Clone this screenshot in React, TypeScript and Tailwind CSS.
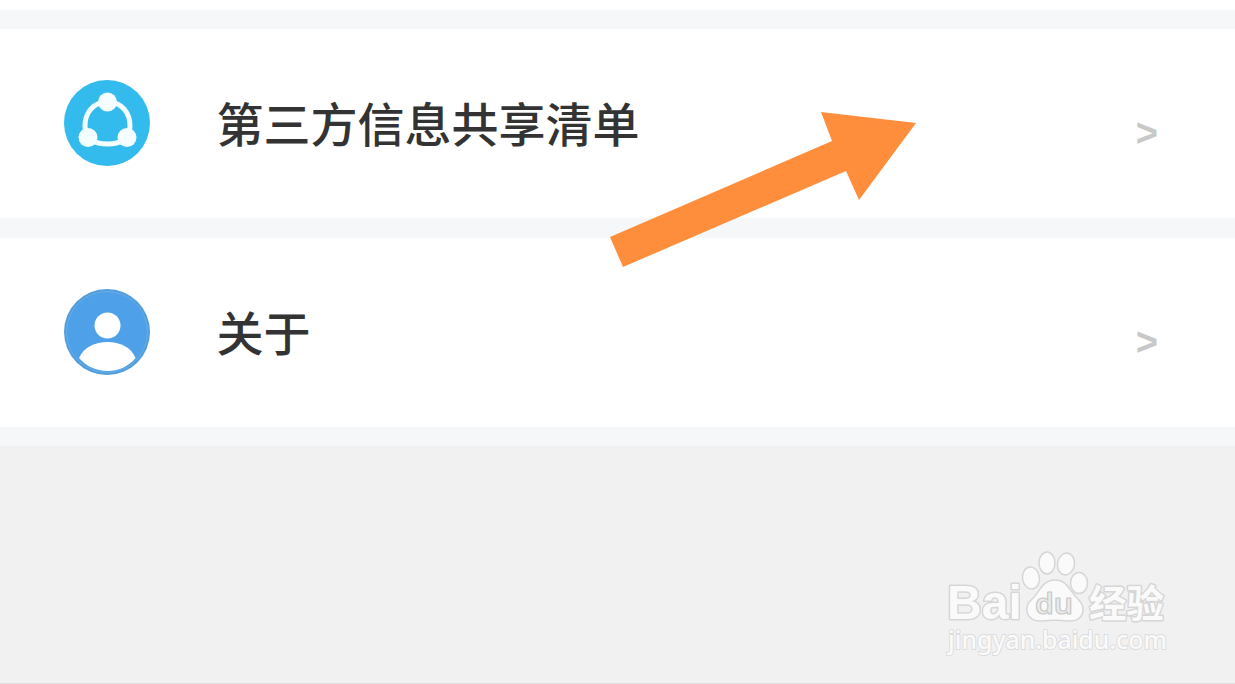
import type { ReactNode } from 'react';

function ShareIcon() {
  return (
    <svg viewBox="0 0 86 86" className="size-[86px] shrink-0" aria-hidden="true">
      <circle cx="43" cy="43" r="43" fill="#33bbee" />
      <path
        d="M43.500 22C29 22 21 33 21 46C21 59 31 64 43.500 64C56 64 66 59 66 46C66 33 58 22 43.500 22Z"
        fill="none"
        stroke="#f4fdff"
        strokeWidth="5"
      />
      <circle cx="43.500" cy="22" r="9.500" fill="#f4fdff" />
      <circle cx="24" cy="57.500" r="9.500" fill="#f4fdff" />
      <circle cx="63" cy="57.500" r="9.500" fill="#f4fdff" />
    </svg>
  );
}

function UserIcon() {
  return (
    <svg viewBox="0 0 86 86" className="size-[86px] shrink-0" aria-hidden="true">
      <circle cx="43" cy="43" r="43" fill="#529edb" />
      <circle cx="43" cy="43" r="40.500" fill="#4ea1e8" stroke="#67aee9" strokeWidth="1" />
      <circle cx="43.500" cy="36.500" r="13" fill="#fff" />
      <path d="M15 69C20 58 31 53 43.500 53C56 53 67 58 71.500 69C64 78 54 82 43.500 82C32 82 22 77 15 69Z" fill="#fff" />
    </svg>
  );
}

interface MenuRowProps {
  icon: ReactNode;
  label: string;
}

function MenuRow({ icon, label }: MenuRowProps) {
  return (
    <button type="button" className="flex h-[189px] w-full items-center bg-white pr-[77px] pb-px pl-16 text-left">
      {icon}
      <span className="ml-[66.500px] flex-1 pb-0.5 text-[47px] leading-[60px] font-medium text-[#333]">{label}</span>
      <span className="pt-5 font-['Liberation_Sans'] text-[38px] leading-10 font-bold text-[#c8c8c8]">&gt;</span>
    </button>
  );
}

function Pointer() {
  return (
    <svg viewBox="0 0 306 156" className="absolute top-[112px] left-[610px] h-[156px] w-[306px]" aria-hidden="true">
      <path d="M211 0L306 11L249 88L236 59L13 155L0 125L222 29Z" fill="#ff8e3c" />
    </svg>
  );
}

function Watermark() {
  return (
    <svg viewBox="0 0 230 120" className="absolute right-[62px] bottom-3 h-[120px] w-[230px] overflow-visible">
      <g fill="#fafafa" stroke="#d6d6d6" strokeWidth="1.500" strokeLinejoin="round">
        <ellipse cx="88" cy="27" rx="8.500" ry="11" transform="rotate(-8 88 27)" />
        <ellipse cx="104" cy="12" rx="8" ry="11" />
        <ellipse cx="123" cy="13" rx="8.500" ry="11" transform="rotate(10 123 13)" />
        <ellipse cx="136" cy="32" rx="8.500" ry="10.500" />
        <path d="M112 29C99 29 97 41 89 48C79 57 84 71 99 70C109 69 115 69 125 70C141 71 144 57 135 48C126 40 125 29 112 29Z" />
        <g style={{ paintOrder: 'stroke' }} className="font-bold">
          <text x="4" y="68" fontSize="49" textLength="75" lengthAdjust="spacingAndGlyphs" strokeWidth="3" className="font-['Liberation_Sans']">
            Bai
          </text>
          <text x="146" y="66" fontSize="38" textLength="75" lengthAdjust="spacingAndGlyphs" strokeWidth="3" className="font-['Noto_Sans_CJK_SC',sans-serif]">
            经验
          </text>
        </g>
        <text x="92" y="63" fontSize="29" textLength="38" lengthAdjust="spacingAndGlyphs" className="font-['Noto_Sans',sans-serif] font-semibold" fill="#ececec" stroke="#c8c8c8" strokeWidth="1.200">
          du
        </text>
        <text x="5" y="97.500" fontSize="26" textLength="219" lengthAdjust="spacingAndGlyphs" className="font-['Noto_Sans',sans-serif] font-medium" stroke="#dcdcdc" strokeWidth="2" style={{ paintOrder: 'stroke' }}>
          jingyan.baidu.com
        </text>
      </g>
    </svg>
  );
}

export default function App() {
  return (
    <main className="relative flex h-[684px] w-[1235px] flex-col overflow-hidden border-b border-[#dedede] bg-[#f1f1f1] font-['Noto_Sans_CJK_SC',sans-serif]">
      <div className="flex flex-col gap-[19.500px] border-b-[19px] border-[#f5f7f9] bg-[#f5f7f9]">
        <div className="h-[9.500px] bg-white" />
        <MenuRow icon={<ShareIcon />} label="第三方信息共享清单" />
        <MenuRow icon={<UserIcon />} label="关于" />
      </div>
      <Pointer />
      <Watermark />
    </main>
  );
}
